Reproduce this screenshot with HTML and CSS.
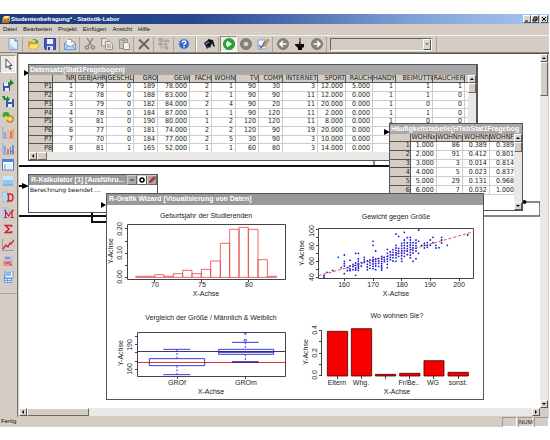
FILE: index.html
```html
<!DOCTYPE html>
<html lang="de">
<head>
<meta charset="utf-8">
<title>Studentenbefragung* - Statistik-Labor</title>
<link rel="stylesheet" href="styles.css">
</head>
<body>
<div class="app">
  <header class="titlebar">
    <svg class="logo" viewBox="0 0 8 8"><path fill="#e9a93a" d="M1 2l2-1h5v5L6 8H0z"/><path fill="#fff0b0" d="M1 3h4l2-2H3z"/><path fill="#5b431c" d="M0 7l3-3 2 1 2-2v4L6 8H0z" opacity=".5"/></svg>
    <h1>Studentenbefragung* - Statistik-Labor</h1>
    <div class="winbtns">
      <button class="btn" aria-label="Minimieren"><svg viewBox="0 0 6 6"><path d="M1 5h3" stroke="#000"/></svg></button>
      <button class="btn" aria-label="Wiederherstellen"><svg viewBox="0 0 6 6"><path d="M2 2V1h3v3H4M1 3h3v2H1z" fill="none" stroke="#000"/></svg></button>
      <button class="btn close" aria-label="Schließen"><svg viewBox="0 0 6 6"><path d="M1 1l4 4M5 1L1 5" stroke="#000"/></svg></button>
    </div>
  </header>
  <nav class="menu">
    <a href="#">Datei</a><a href="#">Bearbeiten</a><a href="#">Projekt</a><a href="#">Einfügen</a><a href="#">Ansicht</a><a href="#">Hilfe</a>
  </nav>
  <div class="toolbar">
    <button class="tool" aria-label="Neu"><svg viewBox="0 0 12 12"><path d="M2 .5h6L10.500 3v8.500H2z" fill="#e6f2fd" stroke="#7fa2cf"/><path d="M8 .5V3h2.500" fill="#9dbfe8" stroke="#5d84ba"/><path d="M3 6l6 5H3z" fill="#b7d5f3"/></svg></button>
    <i class="sep"></i>
    <button class="tool" aria-label="Öffnen"><svg viewBox="0 0 12 12"><path d="M1 11V3h4l1 1h4v7z" fill="#d7a92f"/><path d="M1 11l2-5h9l-2 5z" fill="#ffe36b" stroke="#b98d22" stroke-width=".5"/><path d="M5 2q3-3 5 1l1-1v3H8l1-1Q8 1 5 2z" fill="#3aa53a"/></svg></button>
    <button class="tool" aria-label="Speichern"><svg viewBox="0 0 12 12"><path d="M.5.5h11v11h-10l-1-1z" fill="#4a5cc0" stroke="#30409a"/><path d="M3 1h6v5H3z" fill="#eef1fb"/><path d="M3 8h6v4H3z" fill="#d7def0"/><path d="M4 9h2v3H4z" fill="#30409a"/></svg></button>
    <i class="sep"></i>
    <button class="tool" aria-label="Senden"><svg viewBox="0 0 12 12"><path d="M.5 5L6 1l5.500 4v6.500H.5z" fill="#bcdcf8" stroke="#6c9bd0"/><path d="M3 2h6v5L6 8 3 7z" fill="#fff"/><path d="M7 1l3 2-3 2z" fill="#e8a030"/><path d="M1 6l5 3 5-3M1 11l3-3M11 11L8 8" fill="none" stroke="#5c8fc8" stroke-width=".8"/></svg></button>
    <i class="sep"></i>
    <button class="tool" aria-label="Ausschneiden"><svg viewBox="0 0 12 12" fill="none" stroke="#8b8883" stroke-width="1.300"><path d="M3 0l5 8M9 0L4 8"/><circle cx="3" cy="9.500" r="1.700"/><circle cx="9" cy="9.500" r="1.700"/></svg></button>
    <button class="tool" aria-label="Kopieren"><svg viewBox="0 0 12 12" fill="#e6e3de" stroke="#96938e"><path d="M.5.5H5L7 2.500V8H.5z"/><path d="M4.500 3.500H9l2.500 2.500v5.500h-7z"/><path d="M6 7h4M6 9h4"/></svg></button>
    <button class="tool" aria-label="Einfügen"><svg viewBox="0 0 12 12" fill="#c4c0ba" stroke="#96938e"><path d="M1.500 1.500h8v9h-8z"/><path d="M4 .5h3v2H4z"/><path d="M5.500 4.500h4l2 2v5h-6z" fill="#f0eeea"/></svg></button>
    <i class="sep"></i>
    <button class="tool" aria-label="Löschen"><svg viewBox="0 0 12 12"><path d="M1 1.500l10 9.500M11 1L1 11" stroke="#66635f" stroke-width="1.800"/></svg></button>
    <i class="sep"></i>
    <button class="tool" aria-label="Struktur"><svg viewBox="0 0 12 12" fill="#aaa7a2" stroke="#aaa7a2"><path d="M3 1v10M3 3h7M3 6h6M3 9h7" fill="none"/><path d="M1 0h4v3H1zM7 2h4v2H7zM6 6h3v1H6zM7 9h3v2H7zM1 5h3v2H1z"/></svg></button>
    <i class="sep"></i>
    <button class="tool" aria-label="Hilfe"><svg viewBox="0 0 12 12"><circle cx="6" cy="6" r="5.300" fill="#3567c8" stroke="#a9bfe6"/><path d="M4.200 4.800Q4.200 3 6 3t1.800 1.600Q7.800 5.800 6 6.500V7.300M6 8.300v1.300" fill="none" stroke="#fff" stroke-width="1.400"/></svg></button>
    <i class="sep wide"></i>
    <button class="tool" aria-label="Tinte"><svg viewBox="0 0 12 12"><path d="M1 5l4-3 2 6-3 3z" fill="#222b48"/><path d="M5 1l5 1 2 7-2-1-1-3-2 5-3-3z" fill="#11131a"/><path d="M3 6l3-2" stroke="#91b5df"/></svg></button>
    <i class="sep"></i>
    <button class="tool pressed" aria-label="Ausführen"><svg viewBox="0 0 12 12"><circle cx="6" cy="6" r="5.600" fill="#25a62d" stroke="#138018" stroke-width=".7"/><path d="M4 2.500l5 3.500-5 3.500V7.500H3v-3h1z" fill="#fff"/></svg></button>
    <button class="tool" aria-label="Anhalten"><svg viewBox="0 0 12 12"><circle cx="6" cy="6" r="5.500" fill="#85837f" stroke="#696762" stroke-width=".7"/><circle cx="6" cy="6" r="2.300" fill="#d8d5d0"/></svg></button>
    <button class="tool" aria-label="Bearbeiten"><svg viewBox="0 0 12 12"><path d="M1 2h8v9H1z" fill="#f3f7ff" stroke="#7793c2" stroke-width=".8"/><path d="M2 7l2 3 4-7" fill="none" stroke="#3266b9" stroke-width="1.300"/><path d="M6 7l5-6 1 1-4 6-3 1z" fill="#e79b34" stroke="#8f6025" stroke-width=".5"/></svg></button>
    <i class="sep"></i>
    <button class="tool" aria-label="Zurück"><svg viewBox="0 0 12 12"><circle cx="6" cy="6" r="5.500" fill="#85837f" stroke="#696762" stroke-width=".7"/><path d="M9.500 6H3M6 3L3 6l3 3" fill="none" stroke="#fff" stroke-width="1.600"/></svg></button>
    <button class="tool" aria-label="Zeigen"><svg viewBox="0 0 12 12"><path d="M5 0h1.500v6H10v3l-2 1v2H4v-2L1 7V6h4z" fill="#080808"/><path d="M5.700 0v4" stroke="#888"/></svg></button>
    <button class="tool" aria-label="Vor"><svg viewBox="0 0 12 12"><circle cx="6" cy="6" r="5.500" fill="#85837f" stroke="#696762" stroke-width=".7"/><path d="M2.500 6H9M6 3l3 3-3 3" fill="none" stroke="#fff" stroke-width="1.600"/></svg></button>
    <i class="sep"></i>
    <div class="combo"><select aria-label="Auswahl"><option></option></select><span class="btn"><svg viewBox="0 0 6 6"><path d="M1 2h4L3 4z" fill="#777"/></svg></span></div>
    <i class="sep last"></i>
  </div>
  <div class="main">
    <aside class="toolbox">
      <button class="tool pick" aria-label="Auswählen"><svg viewBox="0 0 12 12"><path d="M4 1v9l2-2 2 3.500 1-.6L7.500 7.500H10z" fill="#fff" stroke="#333" stroke-width=".9"/></svg></button>
      <button class="tool" aria-label="Export"><svg viewBox="0 0 12 12"><path d="M1 4h7v8H1z" fill="#3c57b5"/><path d="M2 4h4v3H2zM3 9h4v3H3z" fill="#e8eefc"/><path d="M6 7V3h2V0l4 4-4 3V5z" fill="#168c2a"/></svg></button>
      <button class="tool" aria-label="Import"><svg viewBox="0 0 12 12"><path d="M4 4h8v8H4z" fill="#3c57b5"/><path d="M6 4h4v3H6zM6 9h4v3H6z" fill="#e8eefc"/><path d="M0 1h3v2h2V1l3 3-3 4V5H2z" fill="#168c2a"/></svg></button>
      <button class="tool" aria-label="Daten"><svg viewBox="0 0 12 12"><ellipse cx="4" cy="4" rx="3.500" ry="3" fill="#3aa33a"/><circle cx="8" cy="8" r="3.500" fill="#e5b035" stroke="#936b1b" stroke-width=".7"/><circle cx="4" cy="7" r="2" fill="#f3d264"/><path d="M6 8h4M8 6v4" stroke="#fff0a0"/></svg></button>
      <button class="tool" aria-label="Balkendiagramm"><svg viewBox="0 0 12 12"><path d="M1 0v11h11" stroke="#8ba4c8" fill="none"/><path d="M2 5h2v6H2z" fill="#79aee8"/><path d="M5 2h2v9H5z" fill="#f1b18d"/><path d="M8 4h2v7H8z" fill="#df746e"/><path d="M10 2h2v9h-2z" fill="#e8a85d"/></svg></button>
      <button class="tool" aria-label="Histogramm"><svg viewBox="0 0 12 12"><path d="M1 0v11h11" stroke="#8ba4c8" fill="none"/><path d="M2 3h2v8H2z" fill="#79aee8"/><path d="M5 6h2v5H5z" fill="#df746e"/><path d="M8 4h1v7H8zM10 2h2v9h-2z" fill="#6c8ed0"/><path d="M8 7l3 3" stroke="#c94a42"/></svg></button>
      <button class="tool" aria-label="Datensatz"><svg viewBox="0 0 12 12"><path d="M.5 1h11v10H.5z" fill="#fff" stroke="#4e7cc4"/><path d="M0 0h12v3H0z" fill="#4e83d3"/><path d="M2 5h2v5H2z" fill="#a9c8ee"/><path d="M5 5h5v5H5z" fill="#dfeeff"/></svg></button>
      <button class="tool" aria-label="Text"><svg viewBox="0 0 12 12"><path d="M1 1h10v10H1z" fill="#8cc8f4"/><path d="M1 1h10v4H1z" fill="#c5e6fc"/><path d="M1 10h10" stroke="#6aa5d6"/></svg></button>
      <button class="tool" aria-label="Datentabelle"><svg viewBox="0 0 12 12"><path d="M0 1h6v10H0z" fill="#b7d8f5" stroke="#88aeda" stroke-width=".6"/><path d="M5 3h3q3 0 3 3.500T8 10H5M6.500 3v7" fill="none" stroke="#d2232c" stroke-width="1.400"/></svg></button>
      <button class="tool" aria-label="Matrix"><svg viewBox="0 0 12 12"><path d="M0 1h7v10H0z" fill="#b7d8f5" stroke="#88aeda" stroke-width=".6"/><path d="M3.500 11V4l3 5 3.500-5v7M2 10.500h3M8.500 10.500H12M2 3.500h2M9.500 3.500H12" fill="none" stroke="#d2232c" stroke-width="1.200"/></svg></button>
      <button class="tool" aria-label="Summe"><svg viewBox="0 0 12 12"><path d="M9.500 4V2.500H3.500l3.500 3.500-3.500 3.500h6V8" fill="none" stroke="#cf1f35" stroke-width="1.600"/></svg></button>
      <button class="tool" aria-label="Liniendiagramm"><svg viewBox="0 0 12 12"><path d="M.5 0v11.500H12" fill="none" stroke="#8ea0b8"/><path d="M1 10l3-4 2 2 2-4 1 1 3-4" fill="none" stroke="#d2232c" stroke-width="1.300"/></svg></button>
      <button class="tool" aria-label="Formel"><svg viewBox="0 0 12 12"><path d="M2 1h9v6H2z" fill="#a8c8ec"/><path d="M1 6h9v5H1z" fill="#e88f92"/><path d="M3 3h5M3 8h5M9 9v2" stroke="#c83a48"/></svg></button>
      <button class="tool" aria-label="Rechner"><svg viewBox="0 0 12 12"><path d="M2 3h8v9H2z" fill="#6c9ae0"/><path d="M3 0h8v7H3z" fill="#eef5ff" stroke="#5d86cb" stroke-width=".8"/><path d="M4 2h5M4 4h5" stroke="#447bd0"/><path d="M3 8h2v1H3zM6 8h3v1H6zM3 10h2v1H3zM6 10h3v1H6z" fill="#e4efff"/></svg></button>
    </aside>
    <section class="desk">
      <div class="canvas">
        <svg class="wires back" viewBox="19 54 521 354">
          <g fill="none" stroke="#111" stroke-width="2"><path d="M19 166H390"/><path d="M19 216H107M92 211V222H107"/><path d="M524 202h16v14h-58" stroke-width="1"/></g>
          <path d="M374 160v6" stroke="#111"/>
          <path d="M19 186h4" stroke="#111" stroke-width="2"/>
          <path d="M22 183l7 3-7 3zM24 70l5 3-5 3zM384 129l6 3-6 3z"/><circle cx="524.500" cy="202" r="2"/>
        </svg>

        <article class="win data">
          <h2>Datensatz(Stat1Fragebogen)</h2>
          <div class="body">
            <table>
              <colgroup><col class="w24"><col class="w23"><col class="w31"><col class="w27"><col class="w24"><col class="w32"><col class="w22"><col class="w24"><col class="w23"><col class="w24"><col class="w35"><col class="w28"><col class="w27"><col class="w23"><col class="w37"><col class="w32"><col></colgroup>
              <thead><tr><th></th><th>NR</th><th>GEBJAHR</th><th>GESCHL</th><th>GRO</th><th>GEW</th><th>FACH</th><th>WOHN</th><th>TV</th><th>COMP</th><th>INTERNET</th><th>SPORT</th><th>RAUCH</th><th>HANDY</th><th>BEIMUTTI</th><th>RAUCHER</th><th></th></tr></thead>
              <tbody>
              <tr><th>P1</th><td>1</td><td>79</td><td>0</td><td>189</td><td>78.000</td><td>2</td><td>1</td><td>90</td><td>30</td><td>3</td><td>12.000</td><td>5.000</td><td>1</td><td>1</td><td>1</td><td></td></tr>
              <tr><th>P2</th><td>2</td><td>78</td><td>0</td><td>188</td><td>83.000</td><td>2</td><td>1</td><td>90</td><td>90</td><td>11</td><td>12.000</td><td>0.000</td><td>1</td><td>1</td><td>0</td><td></td></tr>
              <tr><th>P3</th><td>3</td><td>79</td><td>0</td><td>182</td><td>84.000</td><td>2</td><td>4</td><td>90</td><td>20</td><td>11</td><td>20.000</td><td>0.000</td><td>1</td><td>0</td><td>0</td><td></td></tr>
              <tr><th>P4</th><td>4</td><td>78</td><td>0</td><td>184</td><td>87.000</td><td>1</td><td>1</td><td>90</td><td>120</td><td>11</td><td>2.000</td><td>0.000</td><td>1</td><td>1</td><td>0</td><td></td></tr>
              <tr><th>P5</th><td>5</td><td>81</td><td>0</td><td>190</td><td>80.000</td><td>1</td><td>2</td><td>120</td><td>120</td><td>11</td><td>8.000</td><td>0.000</td><td>1</td><td>0</td><td>0</td><td></td></tr>
              <tr><th>P6</th><td>6</td><td>77</td><td>0</td><td>181</td><td>74.000</td><td>2</td><td>2</td><td>120</td><td>90</td><td>19</td><td>20.000</td><td>0.000</td><td></td><td></td><td></td><td></td></tr>
              <tr><th>P7</th><td>7</td><td>70</td><td>0</td><td>184</td><td>77.000</td><td>2</td><td>5</td><td>30</td><td>90</td><td>3</td><td>10.000</td><td>0.000</td><td></td><td></td><td></td><td></td></tr>
              <tr><th>P8</th><td>8</td><td>81</td><td>1</td><td>165</td><td>52.000</td><td>1</td><td>1</td><td>60</td><td>80</td><td>3</td><td>14.000</td><td>0.000</td><td></td><td></td><td></td><td></td></tr>
              </tbody>
            </table>
            <div class="vscroll"><span class="btn"><svg viewBox="0 0 6 6"><path d="M1 4h4L3 2z"/></svg></span><span class="thumb"></span></div>
          </div>
          <div class="hscroll"><span class="btn"><svg viewBox="0 0 6 6"><path d="M4 1v4L2 3z"/></svg></span><span class="thumb"></span></div>
        </article>

        <article class="win freq">
          <h2>Häufigkeitstabelle[HTabStat1Fragebog</h2>
          <div class="body">
            <table>
              <colgroup><col class="w22"><col class="w26"><col class="w26"><col class="w27"><col></colgroup>
              <thead><tr><th></th><th>WOHNx</th><th>WOHNn</th><th>WOHNh</th><th>WOHNF</th></tr></thead>
              <tbody>
              <tr><th>1</th><td>1.000</td><td>86</td><td>0.389</td><td class="cut">0.389</td></tr>
              <tr><th>2</th><td>2.000</td><td>91</td><td>0.412</td><td class="cut">0.801</td></tr>
              <tr><th>3</th><td>3.000</td><td>3</td><td>0.014</td><td class="cut">0.814</td></tr>
              <tr><th>4</th><td>4.000</td><td>5</td><td>0.023</td><td class="cut">0.837</td></tr>
              <tr><th>5</th><td>5.000</td><td>29</td><td>0.131</td><td class="cut">0.968</td></tr>
              <tr><th>6</th><td>6.000</td><td>7</td><td>0.032</td><td class="cut">1.000</td></tr>
              </tbody>
            </table>
            <div class="vscroll"><span class="btn"><svg viewBox="0 0 6 6"><path d="M1 4h4L3 2z"/></svg></span><span class="thumb"></span><span class="btn end"><svg viewBox="0 0 6 6"><path d="M1 2h4L3 4z"/></svg></span></div>
          </div>
        </article>

        <article class="win calc">
          <header><h2>R-Kalkulator [1] [Ausführu...</h2>
            <button class="btn" aria-label="Verkleinern"><svg viewBox="0 0 8 8"><path d="M2 4h4" stroke="#333"/></svg></button>
            <button class="btn on" aria-label="Ausgabe"><svg viewBox="0 0 8 8"><circle cx="4" cy="4" r="2" fill="none" stroke="#000" stroke-width="1.500"/></svg></button>
            <button class="btn" aria-label="Bearbeiten"><svg viewBox="0 0 8 8"><path d="M1 7l1-3 4-4 2 2-4 4z" fill="#b83136"/><path d="M1 7l1-2 1 1z" fill="#333"/></svg></button>
          </header>
          <p>Berechnung beendet ...</p>
        </article>

        <article class="win wizard">
          <h2>R-Grafik Wizard [Visualisierung von Daten]</h2>
          <div class="plots">
            <svg class="plot" viewBox="107 205 188 97" role="img">
              <g class="axis"><path d="M127.500 224.500h158v55h-158zM125 228.500h2M125 241.500h2M125 253.500h2M125 265.500h2M125 277.500h2M154.500 280v2M201.500 280v2M248.500 280v2"/></g>
              <g transform="translate(105 190) scale(.33333)" fill="none" stroke="#e8484b" stroke-width="2.500"><path d="M92 262V259H149V262V254H177V262V259H205V262V251H233V262V241H261V262V251H289V262V238H317V262V213H346V262V160H374V262V118H402V262V112H430V262V118H459V262V209H487V262V259H515V262H92M120 262V259"/></g>
              <text x="206" y="218">Geburtsjahr der Studierenden</text>
              <text x="155" y="287">70</text><text x="202" y="287">75</text><text x="249" y="287">80</text>
              <text x="206" y="296">X-Achse</text>
              <text transform="translate(122 229) rotate(-90)">0.20</text><text transform="translate(122 253) rotate(-90)">0.10</text><text transform="translate(122 277) rotate(-90)">0.00</text>
              <text transform="translate(113 251) rotate(-90)">Y-Achse</text>
            </svg>
            <svg class="plot" viewBox="295 205 188 97" role="img">
              <g class="axis"><path d="M318.500 228.500h155v50h-155zM316 229.500h2M316 237.500h2M316 245.500h2M316 253.500h2M316 261.500h2M316 269.500h2M316 277.500h2M344.500 279v2M373.500 279v2M401.500 279v2M430.500 279v2M459.500 279v2"/></g>
              <g transform="translate(295 190) scale(.33333)" fill="none">
                <path d="M71 257L537 125" stroke="#e8484b" stroke-width="3" stroke-dasharray="9 6"/>
                <path stroke="#1b1bd8" stroke-width="5.500" stroke-linecap="round" d="M87 257h0M87 262h0M96 247h0M113 241h0M130 202h0M139 233h0M148 195h0M148 214h0M148 221h0M148 228h0M148 251h0M157 242h0M157 233h0M165 211h0M165 228h0M165 237h0M165 242h0M174 223h0M174 230h0M174 239h0M182 190h0M182 219h0M182 226h0M182 234h0M182 240h0M182 256h0M190 190h0M190 207h0M190 214h0M190 221h0M190 228h0M190 234h0M190 241h0M199 218h0M199 228h0M208 202h0M208 209h0M208 216h0M217 213h0M217 223h0M217 231h0M217 239h0M225 210h0M225 218h0M225 226h0M225 235h0M234 154h0M234 166h0M234 202h0M234 209h0M234 215h0M234 222h0M234 229h0M234 236h0M242 183h0M242 207h0M242 214h0M242 221h0M242 228h0M242 239h0M251 205h0M251 213h0M251 220h0M251 229h0M260 199h0M260 207h0M260 214h0M260 221h0M260 228h0M260 234h0M260 240h0M268 202h0M268 209h0M268 215h0M277 178h0M277 190h0M277 199h0M277 207h0M277 214h0M277 223h0M277 233h0M286 186h0M286 194h0M286 202h0M286 209h0M294 179h0M294 187h0M294 195h0M294 203h0M294 213h0M303 132h0M303 166h0M303 174h0M303 181h0M303 188h0M303 195h0M303 203h0M303 214h0M311 139h0M311 175h0M311 183h0M311 190h0M311 199h0M320 160h0M320 167h0M320 175h0M320 182h0M320 190h0M320 197h0M320 206h0M320 214h0M328 127h0M328 150h0M328 158h0M328 166h0M328 174h0M328 182h0M328 190h0M328 199h0M337 143h0M337 159h0M337 168h0M337 176h0M337 184h0M337 194h0M346 142h0M346 150h0M346 158h0M346 165h0M346 172h0M346 179h0M346 187h0M346 195h0M346 203h0M354 158h0M354 166h0M354 174h0M354 181h0M354 189h0M354 214h0M363 150h0M363 159h0M363 167h0M363 175h0M363 183h0M363 206h0M371 120h0M371 154h0M371 190h0M380 166h0M388 160h0M388 166h0M388 174h0M397 158h0M397 166h0M397 172h0M406 150h0M406 166h0M414 142h0M414 158h0M423 166h0M423 174h0M432 173h0M440 142h0M440 150h0M440 159h0M457 166h0M518 135h0"/>
              </g>
              <text x="396" y="219">Gewicht gegen Größe</text>
              <text x="344" y="287">160</text><text x="373" y="287">170</text><text x="402" y="287">180</text><text x="430" y="287">190</text><text x="459" y="287">200</text>
              <text x="396" y="296">X-Achse</text>
              <text transform="translate(314 231) rotate(-90)">100</text><text transform="translate(314 246) rotate(-90)">80</text><text transform="translate(314 261) rotate(-90)">60</text><text transform="translate(314 277) rotate(-90)">40</text>
              <text transform="translate(304 253) rotate(-90)">Y-Achse</text>
            </svg>
            <svg class="plot" viewBox="107 302 188 97" role="img">
              <g class="axis"><path d="M137.500 332.500h148v44h-148zM135 336.500h2M135 344.500h2M135 352.500h2M135 361.500h2M135 369.500h2M177.500 377v2M245.500 377v2"/></g>
              <path d="M138 351.500h147" stroke="#3a3a78"/><path d="M138 362.500h147" stroke="#dc3333"/>
              <g transform="translate(105 300) scale(.33333)" fill="none" stroke="#3838e0" stroke-width="3"><path d="M133 176h166v21H133zM341 148h165v15H341zM175 148h81M175 224h81M381 127h80"/><path d="M341 156h165M381 186h80" stroke="#22229a" stroke-width="4"/><path d="M216 148v28M216 197v27M421 127v21M421 163v23" stroke-dasharray="6 5"/><circle cx="421" cy="101" r="2.500"/><circle cx="421" cy="121" r="3.500"/></g>
              <text x="211" y="320">Vergleich der Größe / Männlich &amp; Weiblich</text>
              <text x="177" y="385">GROf</text><text x="246" y="385">GROm</text>
              <text x="211" y="394">X-Achse</text>
              <text transform="translate(132 345) rotate(-90)">190</text><text transform="translate(132 369) rotate(-90)">160</text>
              <text transform="translate(123 353) rotate(-90)">Y-Achse</text>
            </svg>
            <svg class="plot" viewBox="295 302 188 97" role="img">
              <g class="axis"><path d="M321.500 330v46M319 330.500h2M319 341.500h2M319 353.500h2M319 364.500h2M319 375.500h2M337.500 376v3M361.500 376v3M385.500 376v3M409.500 376v3M433.500 376v3M458.500 376v3"/></g>
              <g transform="translate(295 300) scale(.33333)" fill="#f80000" stroke="#4a0808" stroke-width="2.500"><path d="M97 94h61v134H97zM169 86h61v142h-61zM241 223h61v5h-61zM314 220h61v8h-61zM387 182h60v46h-60zM459 217h61v11h-61z"/></g>
              <text x="397" y="318">Wo wohnen Sie?</text>
              <text x="337" y="385">Eltern</text><text x="361" y="385">Whg.</text><text x="409" y="385">Fr/Be..</text><text x="433" y="385">WG</text><text x="458" y="385">sonst.</text>
              <text x="397" y="394">X-Achse</text>
              <text transform="translate(317 330) rotate(-90)">0.4</text><text transform="translate(317 353) rotate(-90)">0.2</text><text transform="translate(317 375) rotate(-90)">0.0</text>
              <text transform="translate(308 352) rotate(-90)">Y-Achse</text>
            </svg>
          </div>
        </article>
        <svg class="wires front" viewBox="19 54 521 354"><path d="M101 202l5 3-5 3zM384 129l6 3-6 3z"/></svg>
      </div>
      <div class="vscroll big"><span class="btn"><svg viewBox="0 0 6 6"><path d="M1 4h4L3 2z"/></svg></span><span class="thumb"></span><span class="btn end"><svg viewBox="0 0 6 6"><path d="M1 2h4L3 4z"/></svg></span></div>
      <div class="hscroll big"><span class="btn"><svg viewBox="0 0 6 6"><path d="M4 1v4L2 3z"/></svg></span><span class="thumb"></span><span class="btn end"><svg viewBox="0 0 6 6"><path d="M2 1v4l2-2z"/></svg></span></div>
    </section>
  </div>
  <footer class="status"><span class="msg">Fertig</span><span class="cell"></span><span class="cell">NUM</span><span class="cell"></span></footer>
</div>
</body>
</html>
```

FILE: styles.css
```css
* { box-sizing: border-box; }
body {
  margin: 0;
  padding: 14px 1px 13px 0;
  min-height: 100vh;
  display: flex;
  background: #fff;
  color: #111;
  font: 7px/9px "Liberation Sans", Arial, sans-serif;
}
h1, h2, p { margin: 0; font-size: 7px; line-height: 10px; white-space: nowrap; }
svg { display: block; }
button { padding: 0; border: 0; background: none; }
.app { flex: 1; min-width: 0; display: flex; flex-direction: column; background: #d5cdc4; }

.titlebar {
  display: flex; align-items: center; gap: 1px; height: 10px; padding: 0 1px 0 2px;
  background: linear-gradient(90deg, #1b3a7c, #27498c 35%, #4a6cae 52%, #7ea2d6 75%, #a4c4f0 98%);
  color: #fff;
}
.titlebar h1 { flex: 1; font-size: 6px; }
.logo { width: 8px; height: 8px; }
.winbtns { display: flex; }
.btn {
  flex: none; width: 8px; height: 8px; display: flex; align-items: center; justify-content: center;
  background: #d9d3cb; border: 1px solid; border-color: #fff #555 #555 #fff;
}
.btn svg { width: 6px; height: 6px; }
.close { margin-left: 1px; }

.menu { display: flex; gap: 6px; height: 11px; padding: 0 3px; }
.menu a { color: #111; text-decoration: none; font-size: 6px; line-height: 10px; }

.toolbar { display: flex; align-items: center; height: 18px; padding-left: 4px; border-top: 1px solid #f2efea; border-bottom: 1px solid #8a857d; }
.tool { flex: none; width: 17px; height: 16px; display: flex; align-items: center; justify-content: center; }
.tool svg { width: 12px; height: 12px; }
.pressed { background: #eeebe6; border: 1px solid; border-color: #888 #fff #fff #888; }
.sep { flex: none; width: 1px; height: 15px; margin: 0 1px; background: #a9a39a; }
.sep.wide { width: 2px; margin: 0 3px; border-right: 1px solid #fff; }
.sep.last { margin-left: 4px; }
.combo { display: flex; align-items: center; width: 102px; height: 13px; margin-left: 2px; border: 1px solid; border-color: #666 #fff #fff #666; }
.combo select { flex: 1; min-width: 0; height: 11px; padding: 0; border: 0; appearance: none; background: transparent; }
.combo .btn { height: 11px; }

.main { flex: 1; display: flex; min-height: 0; }
.toolbox { width: 18px; display: flex; flex-direction: column; padding-top: 2px; border-right: 1px solid #77726a; }
.toolbox .tool { width: 16px; }
.toolbox .pick { height: 18px; margin-bottom: 4px; background: #eeebe6; border: 1px solid; border-color: #999 #fff #fff #999; }
.toolbox::after { content: ""; height: 1px; margin-top: 8px; background: #a9a39a; }

.desk { flex: 1; min-width: 0; display: grid; grid-template: 1fr 8px / 1fr 8px; padding: 0 1px 1px 1px; border-top: 1px solid #555; }
.canvas { position: relative; overflow: hidden; background: #fff; }
.wires { position: absolute; top: 0; left: 0; width: 521px; height: 354px; }

.win { position: absolute; display: flex; flex-direction: column; background: #fff; border: 1px solid #555; overflow: hidden; }
.win h2 { height: 10px; padding-left: 1px; background: #a8a8a8; color: #fff; }
.data { left: 9px; top: 10px; width: 450px; height: 97px; border-right-width: 2px; }
.freq { left: 370px; top: 69px; width: 134px; height: 88px; }
.calc { left: 9px; top: 120px; width: 130px; height: 39px; }
.wizard { left: 87px; top: 139px; width: 378px; height: 207px; }
.wizard h2 { height: 11px; padding-left: 2px; background: #999; }

.calc header { display: flex; background: #999; height: 10px; }
.calc h2 { flex: 1; background: none; padding-left: 2px; }
.calc .btn { width: 10px; height: 10px; background: #aaa; border-color: #ccc #666 #666 #ccc; }
.calc .on { background: #fff; }
.calc .btn svg { width: 8px; height: 8px; }
.calc p { font-weight: 400; line-height: 9px; padding-left: 1px; font-size: 6px; font-family: "DejaVu Sans", sans-serif; }

.body { flex: 1; display: flex; align-items: flex-start; min-height: 0; }
.body .vscroll { align-self: stretch; }
table { flex: 1; min-width: 0; height: 78px; table-layout: fixed; border-collapse: separate; border-spacing: 0; font: 7px/7px "DejaVu Sans Condensed", "DejaVu Sans", sans-serif; }
.freq table { height: 61px; }
th, td { padding: 0 2px 0 0; border: 0 solid #ccc; border-width: 0 1px 1px 0; text-align: right; font-weight: 400; white-space: nowrap; overflow: hidden; color: #222; }
th { padding-right: 0; background: #d5cdc4; border-color: #555; }
td:last-child, th:last-child:not(:first-child) { border-right: 0; }
.w22 { width: 22px; } .w23 { width: 23px; } .w24 { width: 24px; } .w26 { width: 26px; } .w27 { width: 27px; }
.w28 { width: 28px; } .w31 { width: 31px; } .w32 { width: 32px; } .w35 { width: 35px; } .w37 { width: 37px; }
.cut { padding-right: 0; }

.vscroll, .hscroll { flex: none; display: flex; background: #eae8e4; }
.vscroll { width: 8px; flex-direction: column; }
.hscroll { height: 8px; }
.thumb { background: #d5cdc4; border: 1px solid; border-color: #fff #666 #666 #fff; }
.vscroll .thumb { height: 10px; }
.hscroll .thumb { width: 10px; }
.end { margin-left: auto; }
.vscroll .end { margin: auto 0 0; }
.big.hscroll .thumb { width: 62px; }
.big.vscroll .thumb { height: 34px; }

.plots { flex: 1; display: grid; grid-template: 1fr 1fr / 1fr 1fr; }
.plot { width: 100%; height: 100%; }
.plot text { font: 7px "Liberation Sans", Arial, sans-serif; fill: #222; text-anchor: middle; }
.axis { fill: none; stroke: #444; }

.status { display: flex; gap: 1px; height: 10px; font-size: 6px; line-height: 9px; }
.msg { flex: 1; padding-left: 1px; }
.cell { width: 15px; border: 1px solid; border-color: #999 #fff #fff #999; line-height: 8px; text-align: center; }
```
